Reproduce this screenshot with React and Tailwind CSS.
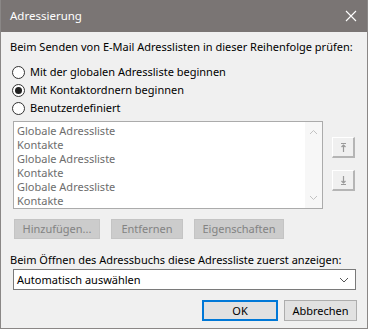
import React, { useState } from "react";

const Radio = ({ checked, label, onClick }) => (
    <div className="flex items-center h-[18px] cursor-default" onClick={onClick}>
        <span className="w-[13px] h-[13px] ml-[2px] rounded-full border border-[#333333] bg-white flex items-center justify-center">
            {checked && <span className="w-[7px] h-[7px] rounded-full bg-[#202020]"></span>}
        </span>
        <span className="ml-[5px]">{label}</span>
    </div>
);

const MoveIcon = ({ down }) => (
    <svg width="9" height="11" viewBox="0 0 9 11" className={down ? "rotate-180" : ""}>
        <path d="M2 1.5h5M4.5 3v7M2.5 5l2-2 2 2" stroke="#9a9a9a" strokeWidth="1.2" fill="none" />
    </svg>
);

const Chevron = ({ up }) => (
    <svg width="9" height="6" viewBox="0 0 9 6">
        <path d={up ? "M1 5l3.5-3.5L8 5" : "M1 1l3.5 3.5L8 1"} stroke="#c2c2c2" strokeWidth="1" fill="none" />
    </svg>
);

const App = () => {
    const [mode, setMode] = useState(1);
    const entries = ["Globale Adressliste", "Kontakte", "Globale Adressliste", "Kontakte", "Globale Adressliste", "Kontakte"];

    return (
        <div className="w-[368px] h-[329px] flex flex-col bg-[#f0f0f0] text-[11px] text-black font-['Noto_Sans',sans-serif] whitespace-nowrap border-l border-r border-b border-[#8a8786] overflow-hidden">
            {/* Title bar */}
            <div className="h-[32px] shrink-0 bg-[#7a7574] text-white flex items-center justify-between pl-[9px] pr-[10px]">
                <span className="text-[11.5px]">Adressierung</span>
                <svg width="12" height="12" viewBox="0 0 12 12">
                    <path d="M1 1l10 10M11 1L1 11" stroke="white" strokeWidth="1.1" />
                </svg>
            </div>

            <div className="flex flex-col px-[9px] pt-[7px] leading-[16px]">
                <p>Beim Senden von E-Mail Adresslisten in dieser Reihenfolge prüfen:</p>

                <div className="mt-[8px] flex flex-col">
                    <Radio checked={mode === 0} label="Mit der globalen Adressliste beginnen" onClick={() => setMode(0)} />
                    <Radio checked={mode === 1} label="Mit Kontaktordnern beginnen" onClick={() => setMode(1)} />
                    <Radio checked={mode === 2} label="Benutzerdefiniert" onClick={() => setMode(2)} />
                </div>

                {/* List with move buttons */}
                <div className="mt-[4px] flex">
                    <div className="ml-[3px] w-[310px] h-[88px] bg-white border border-[#ababab] flex overflow-hidden">
                        <div className="flex-1 pl-[3px] pt-[2px] text-[#6d6d6d] leading-[14px]">
                            {entries.map((entry, index) => (
                                <div key={index}>{entry}</div>
                            ))}
                        </div>
                        <div className="w-[17px] bg-[#f7f7f7] flex flex-col items-center justify-between py-[7px]">
                            <Chevron up />
                            <Chevron />
                        </div>
                    </div>
                    <div className="ml-[9px] mt-[16px] flex flex-col gap-[12px]">
                        <button className="w-[23px] h-[21px] bg-[#f0f0f0] border-t border-l border-white border-r-2 border-b-2 border-r-[#b5b5b5] border-b-[#b5b5b5] flex items-center justify-center">
                            <MoveIcon />
                        </button>
                        <button className="w-[23px] h-[21px] bg-[#f0f0f0] border-t border-l border-white border-r-2 border-b-2 border-r-[#b5b5b5] border-b-[#b5b5b5] flex items-center justify-center">
                            <MoveIcon down />
                        </button>
                    </div>
                </div>

                {/* Disabled actions */}
                <div className="mt-[10px] ml-[4px] flex gap-[11px] text-[#838383]">
                    <button className="w-[86px] h-[20px] bg-[#cccccc] border border-[#c4c4c4]">Hinzufügen...</button>
                    <button className="w-[72px] h-[20px] bg-[#cccccc] border border-[#c4c4c4]">Entfernen</button>
                    <button className="w-[90px] h-[20px] bg-[#cccccc] border border-[#c4c4c4]">Eigenschaften</button>
                </div>

                <p className="mt-[13px]">Beim Öffnen des Adressbuchs diese Adressliste zuerst anzeigen:</p>

                <div className="mt-[1px] ml-[3px] w-[343px] h-[21px] bg-white border border-[#7a7a7a] flex items-center justify-between pl-[3px] pr-[6px]">
                    <span>Automatisch auswählen</span>
                    <svg width="10" height="6" viewBox="0 0 10 6">
                        <path d="M1 1l4 4 4-4" stroke="#555555" strokeWidth="1" fill="none" />
                    </svg>
                </div>

                <div className="mt-[10px] flex justify-end gap-[6px] pr-[1px]">
                    <button className="w-[76px] h-[21px] bg-[#e1e1e1] border-2 border-[#0078d7]">OK</button>
                    <button className="w-[73px] h-[21px] bg-[#e1e1e1] border border-[#adadad]">Abbrechen</button>
                </div>
            </div>
        </div>
    );
};

export default App;
